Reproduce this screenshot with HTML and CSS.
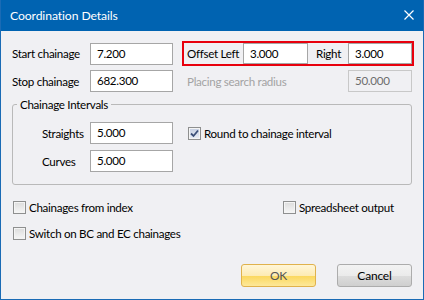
FILE: index.html
```html
<!DOCTYPE html>
<html lang="en">
<head>
    <meta charset="UTF-8">
    <title>Coordination Details</title>
    <link rel="stylesheet" href="styles.css">
</head>
<body>
    <div class="window">
        <div class="titlebar">
            <span class="title">Coordination Details</span>
            <svg class="close" width="10" height="10" viewBox="0 0 10 10">
                <path d="M0.5 0.5 L9.5 9.5 M9.5 0.5 L0.5 9.5" stroke="#fff" stroke-width="1.2" />
            </svg>
        </div>

        <div class="content">
            <!-- chainage range + offsets -->
            <div class="row row-start">
                <span class="lbl">Start chainage</span>
                <div class="field">7.200</div>
                <div class="offset">
                    <span class="olbl olbl-left">Offset Left</span>
                    <div class="field field-off">3.000</div>
                    <span class="olbl olbl-right">Right</span>
                    <div class="field field-off field-last">3.000</div>
                </div>
            </div>
            <div class="row row-stop">
                <span class="lbl">Stop chainage</span>
                <div class="field">682.300</div>
                <span class="placing">Placing search radius</span>
                <div class="field field-disabled">50.000</div>
            </div>

            <!-- Chainage Intervals group -->
            <div class="group">
                <span class="group-title">Chainage Intervals</span>
                <div class="grow">
                    <span class="glbl">Straights</span>
                    <div class="field">5.000</div>
                    <label class="check check-round">
                        <span class="box checked">
                            <svg width="9" height="9" viewBox="0 0 9 9">
                                <path d="M1 4.5 L3.5 7 L8 1.5" fill="none" stroke="#3b4f78" stroke-width="1.8" />
                            </svg>
                        </span>
                        Round to chainage interval
                    </label>
                </div>
                <div class="grow grow-second">
                    <span class="glbl">Curves</span>
                    <div class="field">5.000</div>
                </div>
            </div>

            <!-- options -->
            <div class="checks checks-first">
                <label class="check check-wide"><span class="box"></span>Chainages from index</label>
                <label class="check"><span class="box"></span>Spreadsheet output</label>
            </div>
            <div class="checks checks-second">
                <label class="check"><span class="box"></span>Switch on BC and EC chainages</label>
            </div>

            <div class="buttons">
                <button class="btn btn-ok">OK</button>
                <button class="btn">Cancel</button>
            </div>
        </div>
    </div>
</body>
</html>
```

FILE: styles.css
```css
* {
    box-sizing: border-box;
}
body {
    margin: 0;
    font-family: Lato, "Liberation Sans", sans-serif;
    font-size: 11.6px;
    letter-spacing: -0.3px;
    color: #000;
    white-space: nowrap;
}
.window {
    width: 424px;
    height: 300px;
    background-color: #f0f0f3;
    border: 1px solid #1a6bb5;
    border-top: 0;
}
.titlebar {
    height: 31px;
    background-color: #0063b1;
    color: #fff;
    display: flex;
    align-items: center;
    justify-content: space-between;
    padding: 0 9px 1px 9px;
}
.title {
    font-size: 12.2px;
    letter-spacing: -0.1px;
}
.close {
    display: block;
}
.content {
    padding: 10px 0 0 11px;
}
.row {
    display: flex;
    align-items: center;
}
.row-start {
    height: 25px;
}
.row-stop {
    height: 22px;
    margin-top: 4px;
}
.lbl {
    width: 78px;
}
.field {
    width: 83px;
    height: 22px;
    background-color: #fff;
    border: 1px solid #a6a6a6;
    padding-left: 6px;
    line-height: 20px;
}
.offset {
    margin-left: 9px;
    width: 232px;
    height: 25px;
    border: 2px solid #e8000d;
    display: flex;
    align-items: center;
    padding-left: 3px;
}
.olbl-left {
    width: 56px;
}
.olbl-right {
    width: 40px;
    padding-left: 8px;
}
.field-off {
    width: 65px;
    height: 21px;
    line-height: 19px;
}
.field-last {
    width: 64px;
}
.placing {
    margin-left: 14px;
    width: 161px;
    color: #a3a3a3;
}
.field-disabled {
    width: 64px;
    background-color: #f0f0f3;
    border-color: #c8c8c8;
    color: #6d6d6d;
}
.group {
    position: relative;
    margin-top: 12px;
    width: 400px;
    height: 81px;
    border: 1px solid #b9b9b9;
    border-radius: 3px;
    padding: 17px 0 0 29px;
}
.group-title {
    position: absolute;
    top: -8px;
    left: 4px;
    padding: 0 3px;
    line-height: 15px;
    background-color: #f0f0f3;
}
.grow {
    display: flex;
    align-items: center;
    height: 22px;
}
.grow-second {
    margin-top: 6px;
}
.glbl {
    width: 48px;
}
.check {
    display: flex;
    align-items: center;
    height: 16px;
}
.check-round {
    margin-left: 15px;
}
.box {
    width: 13px;
    height: 13px;
    margin-right: 3px;
    border: 1px solid #8e8f8f;
    background: linear-gradient(#dcdcdc, #f6f6f6);
    box-shadow: inset 0 0 0 1px #f4f4f4;
    display: flex;
    align-items: center;
    justify-content: center;
}
.box.checked {
    background: linear-gradient(#c5cfe2, #e9edf5);
}
.checks {
    display: flex;
    padding-left: 1px;
}
.checks-first {
    margin-top: 14px;
}
.checks-second {
    margin-top: 10px;
}
.check-wide {
    width: 270px;
}
.buttons {
    display: flex;
    gap: 21px;
    margin-top: 23px;
    padding-left: 229px;
}
.btn {
    width: 75px;
    height: 23px;
    font-family: inherit;
    font-size: 12px;
    letter-spacing: -0.2px;
    color: #000;
    border: 1px solid #acacac;
    border-radius: 3px;
    background: linear-gradient(#f3f3f3 0%, #ebebeb 50%, #dddddd 51%, #cfcfcf 100%);
    padding: 0;
}
.btn-ok {
    color: #555;
    border-color: #e0b24c;
    background: linear-gradient(#fff6d8 0%, #fdebb4 50%, #fbd75c 51%, #fde89a 100%);
}
```
